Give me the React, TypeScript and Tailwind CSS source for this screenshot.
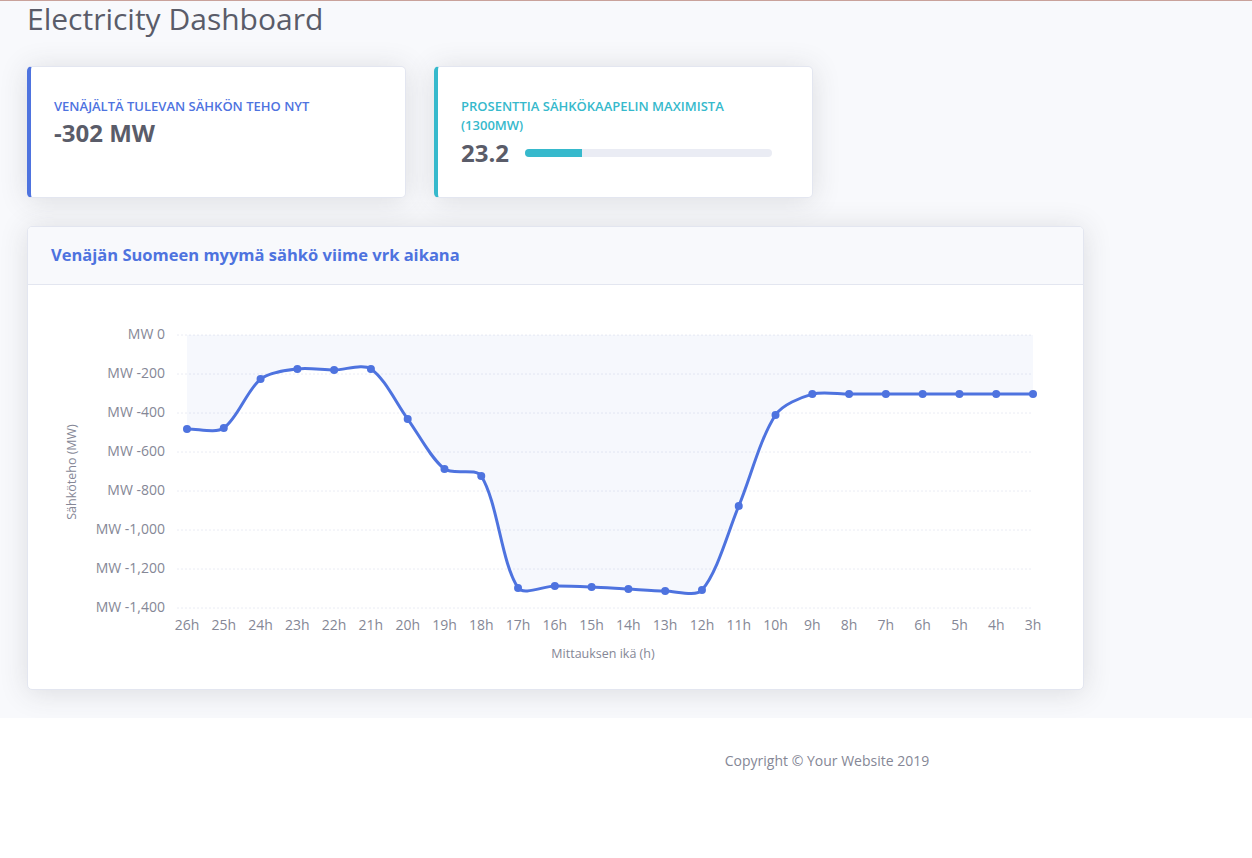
import React from "react";

const values = [
  -482, -477, -226, -174, -179, -174, -431, -687, -723, -1297, -1287, -1292, -1303, -1313, -1308, -877,
  -410, -303, -303, -303, -303, -303, -303, -302,
];
const labels = values.map((_, i) => `${26 - i}h`);
const ticks = [0, -200, -400, -600, -800, -1000, -1200, -1400];

const LEFT = 187;
const RIGHT = 1033;
const TOP = 335;
const BOTTOM = 608;

const px = (i: number) => LEFT + (i * (RIGHT - LEFT)) / (values.length - 1);
const py = (v: number) => TOP + (-v / 1400) * (BOTTOM - TOP);

function buildPath() {
  const pts = values.map((v, i) => ({ x: px(i), y: py(v) }));
  const cps = pts.map((cur, i) => {
    const prev = pts[i - 1] || cur;
    const next = pts[i + 1] || cur;
    const d01 = Math.hypot(cur.x - prev.x, cur.y - prev.y);
    const d12 = Math.hypot(next.x - cur.x, next.y - cur.y);
    const tot = d01 + d12 || 1;
    const fa = (0.3 * d01) / tot;
    const fb = (0.3 * d12) / tot;
    const clampY = (y: number) => Math.max(TOP, Math.min(BOTTOM, y));
    return {
      p: { x: cur.x - fa * (next.x - prev.x), y: clampY(cur.y - fa * (next.y - prev.y)) },
      n: { x: cur.x + fb * (next.x - prev.x), y: clampY(cur.y + fb * (next.y - prev.y)) },
    };
  });
  let d = `M${pts[0].x},${pts[0].y}`;
  for (let i = 1; i < pts.length; i++) {
    const a = cps[i - 1].n;
    const b = cps[i].p;
    d += ` C${a.x},${a.y} ${b.x},${b.y} ${pts[i].x},${pts[i].y}`;
  }
  return { d, pts };
}

const AreaChart = () => {
  const { d, pts } = buildPath();
  const font = { fontFamily: "'Open Sans', 'Noto Sans', sans-serif" };
  return (
    <svg width="1055" height="404" className="block">
      <g transform="translate(-28,-285)" style={font}>
        {ticks.map((t) => (
          <g key={t}>
            <line x1={177} x2={RIGHT} y1={py(t)} y2={py(t)} stroke="#eaecf4" strokeDasharray="2 2" />
            <text x={165} y={py(t)} textAnchor="end" dominantBaseline="middle" fontSize="14" fill="#858796">
              {`MW ${t === 0 ? "0" : "-" + Math.abs(t).toLocaleString("en-US")}`}
            </text>
          </g>
        ))}
        <path d={`${d} L${RIGHT},${TOP} L${LEFT},${TOP} Z`} fill="rgba(78,115,223,0.05)" />
        <path d={d} fill="none" stroke="#4e73df" strokeWidth="3" />
        {pts.map((p, i) => (
          <circle key={i} cx={p.x} cy={p.y} r="4" fill="#4e73df" />
        ))}
        {labels.map((l, i) => (
          <text key={l} x={px(i)} y={626} textAnchor="middle" dominantBaseline="middle" fontSize="14" fill="#858796">
            {l}
          </text>
        ))}
        <text x={603} y={655} textAnchor="middle" dominantBaseline="middle" fontSize="12.5" fill="#858796">
          Mittauksen ikä (h)
        </text>
        <text
          x={73}
          y={472}
          transform="rotate(-90 73 472)"
          textAnchor="middle"
          dominantBaseline="middle"
          fontSize="12.5"
          fill="#858796"
        >
          Sähköteho (MW)
        </text>
      </g>
    </svg>
  );
};

const cardShadow = "shadow-[0_0.15rem_1.75rem_0_rgba(58,59,69,0.15)]";

export default function App() {
  return (
    <div className="min-h-screen flex flex-col border-t border-[#c9a29b] font-['Open_Sans','Noto_Sans',sans-serif]">
      <main className="bg-[#f8f9fc] px-[27px] pb-[28px]">
        <h1 className="text-[30px] leading-[36px] text-[#5a5c69] font-normal">Electricity Dashboard</h1>

        <div className="flex gap-[28px] mt-[29px]">
          <div className={`w-[379px] h-[132px] bg-white rounded-[5px] border border-[#e3e6f0] border-l-4 border-l-[#4e73df] pl-[23px] pt-[30px] ${cardShadow}`}>
            <div className="text-[13px] font-semibold uppercase text-[#4e73df] leading-[19px]">
              Venäjältä tulevan sähkön teho nyt
            </div>
            <div className="text-[24px] font-bold text-[#5a5c69] leading-[29px] mt-[2px]">-302 MW</div>
          </div>

          <div className={`w-[379px] h-[132px] bg-white rounded-[5px] border border-[#e3e6f0] border-l-4 border-l-[#36b9cc] pl-[23px] pt-[30px] ${cardShadow}`}>
            <div className="text-[13px] font-semibold uppercase text-[#36b9cc] leading-[19px]">
              <div>Prosenttia sähkökaapelin maximista</div>
              <div>(1300MW)</div>
            </div>
            <div className="flex items-center mt-[3px]">
              <div className="text-[24px] font-bold text-[#5a5c69] leading-[29px] w-[64px]">23.2</div>
              <div className="w-[247px] h-[8px] rounded bg-[#eaecf4] overflow-hidden">
                <div className="h-full bg-[#36b9cc]" style={{ width: "23.2%" }} />
              </div>
            </div>
          </div>
        </div>

        <div className={`mt-[28px] w-[1057px] bg-white rounded-[5px] border border-[#e3e6f0] overflow-hidden ${cardShadow}`}>
          <div className="h-[58px] bg-[#f8f9fc] border-b border-[#e3e6f0] px-[23px] flex items-center">
            <h6 className="text-[16.5px] font-bold text-[#4e73df]">Venäjän Suomeen myymä sähkö viime vrk aikana</h6>
          </div>
          <AreaChart />
        </div>
      </main>

      <footer className="bg-white flex-1 py-8">
        <div className="pl-[402px] text-center text-[14px] leading-[21px] text-[#858796]">
          Copyright © Your Website 2019
        </div>
      </footer>
    </div>
  );
}
